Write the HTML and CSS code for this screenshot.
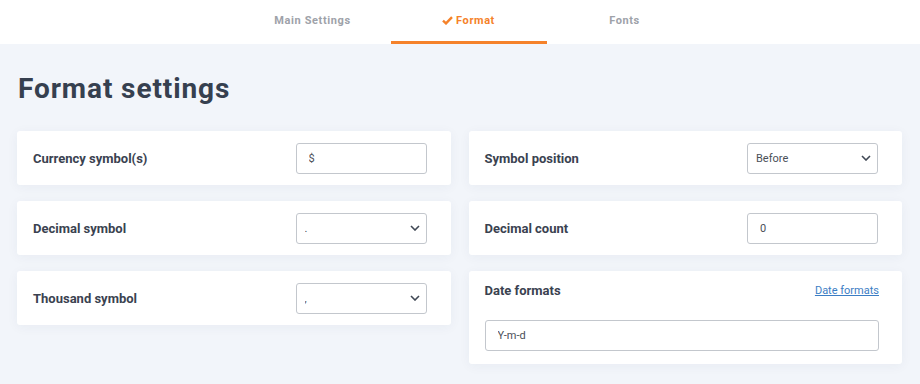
FILE: index.html
```html
<!DOCTYPE html>
<html lang="en">
<head>
  <meta charset="UTF-8" />
  <meta name="viewport" content="width=device-width, initial-scale=1.0"/>
  <title>Format settings</title>
  <link rel="stylesheet" href="styles.css">
</head>
<body>
  <nav class="tabs">
    <a class="tab">Main Settings</a>
    <a class="tab active">
      <svg width="11" height="9" viewBox="0 0 11 9"><path d="M1 4.6 L4 7.4 L10 1.2" fill="none" stroke="#f5822a" stroke-width="2.4"/></svg>
      Format
    </a>
    <a class="tab">Fonts</a>
  </nav>

  <main class="page">
    <h1>Format settings</h1>

    <div class="columns">
      <div class="column">
        <div class="card">
          <label>Currency symbol(s)</label>
          <input type="text" value="$">
        </div>
        <div class="card">
          <label>Decimal symbol</label>
          <select><option>.</option><option>,</option></select>
        </div>
        <div class="card">
          <label>Thousand symbol</label>
          <select><option>,</option><option>.</option></select>
        </div>
      </div>

      <div class="column">
        <div class="card">
          <label>Symbol position</label>
          <select><option>Before</option><option>After</option></select>
        </div>
        <div class="card">
          <label>Decimal count</label>
          <input type="text" value="0">
        </div>
        <div class="card card-stack">
          <div class="card-head">
            <label>Date formats</label>
            <a href="#" class="link">Date formats</a>
          </div>
          <input type="text" class="wide" value="Y-m-d">
        </div>
      </div>
    </div>
  </main>
</body>
</html>
```

FILE: styles.css
```css
body {
  margin: 0;
  font-family: Roboto, 'Liberation Sans', sans-serif;
  background-color: #f2f5fa;
  color: #37404e;
}
.tabs {
  display: flex;
  justify-content: center;
  padding-left: 17px;
  height: 44px;
  background: #fff;
}
.tab {
  width: 156px;
  display: flex;
  align-items: center;
  justify-content: center;
  gap: 3px;
  padding-bottom: 3px;
  box-sizing: border-box;
  font-size: 11px;
  font-weight: 700;
  letter-spacing: 0.6px;
  color: #9ea2a9;
}
.tab.active {
  color: #f5822a;
  border-bottom: 3px solid #f5822a;
  padding-bottom: 0;
}
.page {
  padding: 28px 18px 20px 17px;
}
h1 {
  margin: 0 0 26px 1px;
  font-size: 28px;
  font-weight: 700;
  letter-spacing: 0.9px;
  color: #36404f;
}
.columns {
  display: flex;
  gap: 18px;
}
.column {
  flex: 1;
  display: flex;
  flex-direction: column;
  gap: 16px;
}
.card {
  height: 54px;
  box-sizing: border-box;
  padding: 0 24px 0 16px;
  display: flex;
  align-items: center;
  justify-content: space-between;
  background: #fff;
  border-radius: 3px;
  box-shadow: 0 2px 12px rgba(40, 60, 100, 0.05);
}
.card label {
  font-size: 13px;
  font-weight: 700;
  color: #3a4250;
}
input, select {
  width: 131px;
  height: 31px;
  box-sizing: border-box;
  border: 1px solid #c3c7cd;
  border-radius: 3px;
  background-color: #fff;
  font-family: Roboto, 'Liberation Sans', sans-serif;
  font-size: 11px;
  color: #4a4f57;
  padding: 0 12px;
  outline: none;
}
select {
  appearance: none;
  -webkit-appearance: none;
  padding: 0 8px;
  background-image: url("data:image/svg+xml,%3Csvg xmlns='http://www.w3.org/2000/svg' width='10' height='6' viewBox='0 0 10 6'%3E%3Cpath d='M1 1 L5 5 L9 1' fill='none' stroke='%23404855' stroke-width='1.6'/%3E%3C/svg%3E");
  background-repeat: no-repeat;
  background-position: right 6px center;
}
.card-stack {
  height: auto;
  flex-direction: column;
  align-items: stretch;
  justify-content: flex-start;
  padding: 12px 23px 13px 16px;
  gap: 23px;
}
.card-head {
  display: flex;
  justify-content: space-between;
  align-items: center;
  height: 14px;
}
input.wide {
  width: 100%;
}
.link {
  font-size: 11px;
  color: #3b7dc4;
  text-decoration: underline;
}
```
